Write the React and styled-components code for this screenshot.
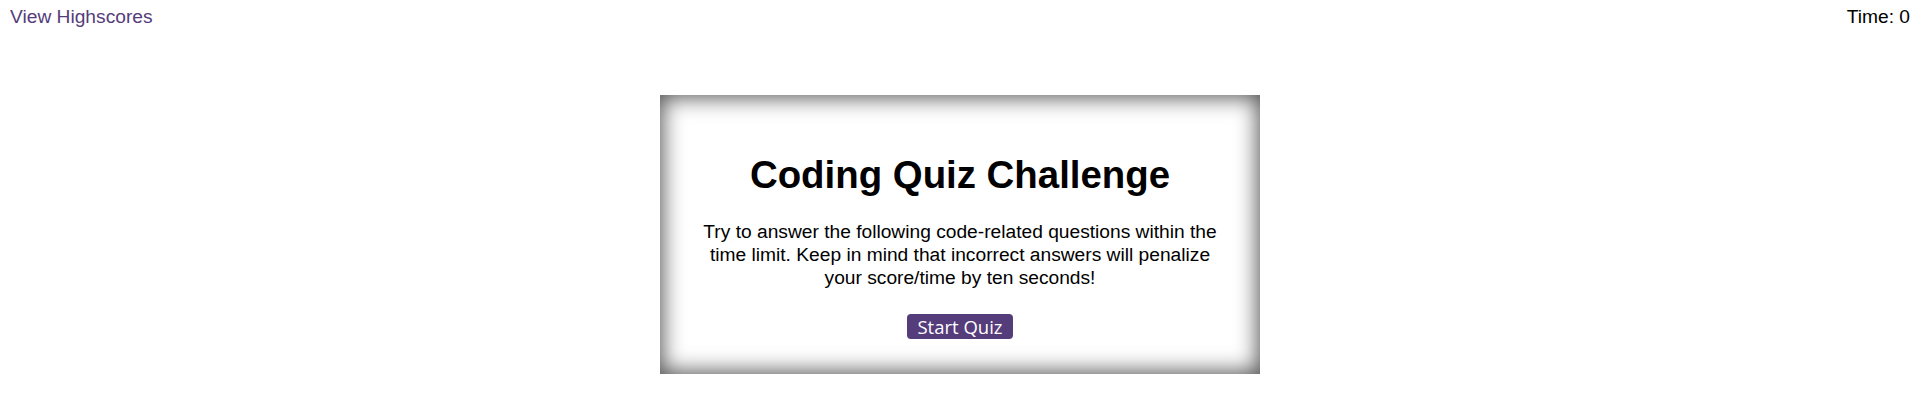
import React from "react";
import styled, { createGlobalStyle } from "styled-components";

const Global = createGlobalStyle`
  html, body { margin: 0; padding: 0; background: #ffffff; }
  body { font-family: "Liberation Sans", Arial, sans-serif; color: #000; }
`;

const Header = styled.header`
  display: flex;
  justify-content: space-between;
  align-items: flex-start;
  padding: 6px 6px 0 10px;
  font-size: 19.2px;
  line-height: 22px;
`;

const Link = styled.a`
  color: #553c7b;
  text-decoration: none;
  cursor: pointer;
`;

const Timer = styled.div`
  color: #000;
`;

const Main = styled.main`
  display: flex;
  justify-content: center;
  padding-top: 67px;
  padding-left: 4px;
`;

const Card = styled.section`
  width: 600px;
  box-sizing: border-box;
  padding: 58px 40px 35px;
  display: flex;
  flex-direction: column;
  align-items: center;
  text-align: center;
  background: #fff;
  box-shadow: inset 0 0 22px 2px rgba(0, 0, 0, 0.7);
`;

const Title = styled.h1`
  margin: 0;
  font-size: 38.4px;
  line-height: 44px;
  font-weight: 700;
`;

const Intro = styled.p`
  margin: 23px 0 0;
  font-size: 19.2px;
  line-height: 23px;
`;

const StartButton = styled.button`
  margin-top: 25px;
  background: #553c7b;
  color: #fff;
  border: none;
  border-radius: 4px;
  padding: 0 10px;
  height: 25px;
  font-family: "Open Sans", "DejaVu Sans", sans-serif;
  font-size: 18.5px;
  line-height: 25px;
  cursor: pointer;
`;

export default function App() {
  return (
    <>
      <Global />
      <Header>
        <Link>View Highscores</Link>
        <Timer>Time: 0</Timer>
      </Header>
      <Main>
        <Card>
          <Title>Coding Quiz Challenge</Title>
          <Intro>
            Try to answer the following code-related questions within the time
            limit. Keep in mind that incorrect answers will penalize your
            score/time by ten seconds!
          </Intro>
          <StartButton>Start Quiz</StartButton>
        </Card>
      </Main>
    </>
  );
}
